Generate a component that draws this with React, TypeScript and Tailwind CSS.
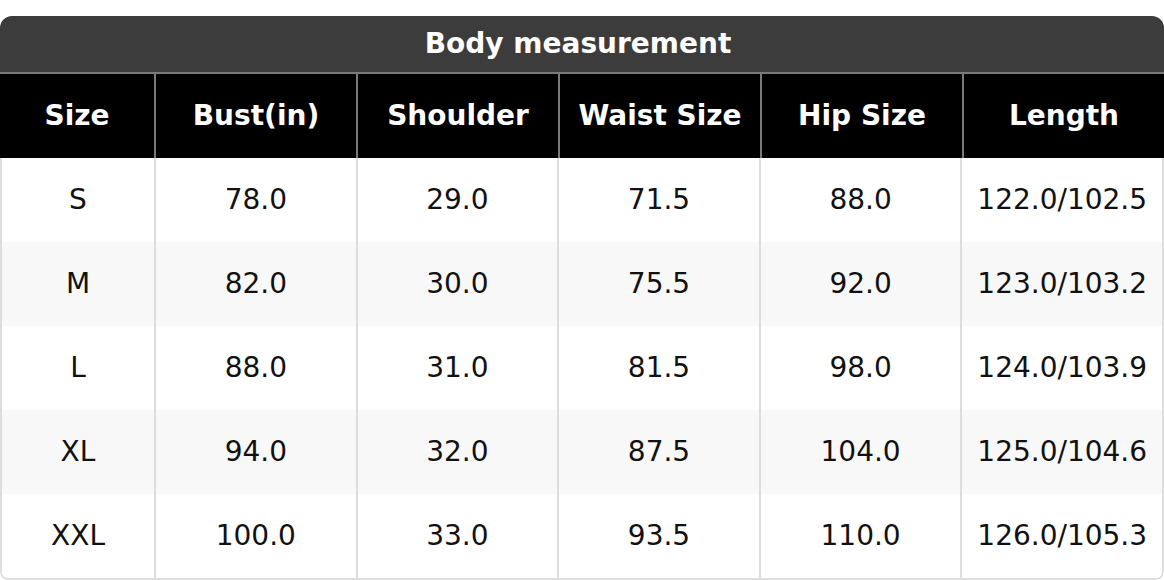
import React from "react";

const headers = ["Size", "Bust(in)", "Shoulder", "Waist Size", "Hip Size", "Length"];
const rows: string[][] = [
  ["S", "78.0", "29.0", "71.5", "88.0", "122.0/102.5"],
  ["M", "82.0", "30.0", "75.5", "92.0", "123.0/103.2"],
  ["L", "88.0", "31.0", "81.5", "98.0", "124.0/103.9"],
  ["XL", "94.0", "32.0", "87.5", "104.0", "125.0/104.6"],
  ["XXL", "100.0", "33.0", "93.5", "110.0", "126.0/105.3"],
];

export default function App() {
  return (
    <div
      className="w-[1164px] h-[580px] bg-white pt-4"
      style={{ fontFamily: '"DejaVu Sans", Verdana, sans-serif' }}
    >
      <div className="rounded-t-xl rounded-b-lg overflow-hidden">
        <div className="h-[58px] bg-[#3c3c3c] flex items-center justify-center pr-2 text-white font-bold text-[28px] border-b-2 border-[#7a7a7a]">
          Body measurement
        </div>
        <div className="grid grid-cols-[154px_repeat(5,1fr)] bg-black">
          {headers.map((h, i) => (
            <div
              key={h}
              className={`h-[84px] flex items-center justify-center text-white font-bold text-[28px] ${
                i > 0 ? "border-l-2 border-[#7a7a7a]" : ""
              }`}
            >
              {h}
            </div>
          ))}
        </div>
        <div className="border-x-2 border-b-2 border-[#dddddd] rounded-b-lg overflow-hidden">
          {rows.map((r, ri) => (
            <div
              key={ri}
              className={`grid grid-cols-[152px_repeat(5,1fr)] ${ri % 2 === 1 ? "bg-[#f8f8f8]" : "bg-white"}`}
            >
              {r.map((c, ci) => (
                <div
                  key={ci}
                  className={`h-[84px] flex items-center justify-center whitespace-nowrap text-[28px] text-[#111111] ${
                    ci > 0 ? "border-l-2 border-[#dddddd]" : ""
                  }`}
                >
                  {c}
                </div>
              ))}
            </div>
          ))}
        </div>
      </div>
    </div>
  );
}
